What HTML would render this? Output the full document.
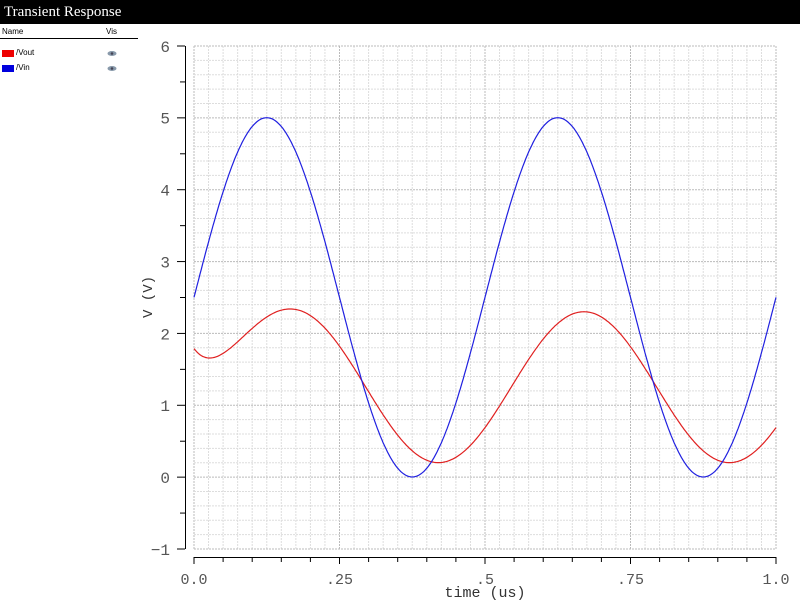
<!DOCTYPE html>
<html><head><meta charset="utf-8"><style>
body{margin:0;width:800px;height:600px;background:#fff;overflow:hidden;position:relative;font-family:"Liberation Mono",monospace}
#tb{position:absolute;left:0;top:0;width:800px;height:24px;background:#000;color:#fff;font-family:"Liberation Serif",serif;font-size:15px;line-height:24px;padding-left:4px;box-sizing:border-box}
.s{position:absolute;font-size:9px;color:#000}
</style></head><body>
<div id="tb">Transient Response</div>
<div class="s" style="left:2px;top:27px;font-family:'Liberation Sans',sans-serif;font-size:8px">Name</div>
<div class="s" style="left:106px;top:27px;font-family:'Liberation Sans',sans-serif;font-size:8px">Vis</div>
<div style="position:absolute;left:0;top:38px;width:138px;height:1px;background:#000"></div>
<div style="position:absolute;left:2px;top:50px;width:12px;height:7px;background:#e00"></div>
<div style="position:absolute;left:2px;top:65px;width:12px;height:7px;background:#00d"></div>
<div class="s" style="left:16px;top:48px;font-family:'Liberation Sans',sans-serif;font-size:8px">/Vout</div>
<div class="s" style="left:16px;top:63px;font-family:'Liberation Sans',sans-serif;font-size:8px">/Vin</div>
<svg style="position:absolute;left:106px;top:50px" width="12" height="24"><ellipse cx="6" cy="3.5" rx="4.5" ry="2.5" fill="#8899aa"/><circle cx="6" cy="3.5" r="1.3" fill="#445"/><ellipse cx="6" cy="18.5" rx="4.5" ry="2.5" fill="#8899aa"/><circle cx="6" cy="18.5" r="1.3" fill="#445"/></svg>
<svg id="p" style="position:absolute;left:0;top:0" width="800" height="600" font-family="Liberation Mono, monospace"></svg>
<script>
var s='';
var X=function(t){return 194+t*582},Y=function(v){return 477-v*71.857};
for(var i=0;i<=40;i++){var x=X(i/40);s+='<line x1="'+x+'" y1="46" x2="'+x+'" y2="549" stroke="'+(i%10==0?'#bbb':'#ddd')+'" stroke-dasharray="2,1"/>';}
for(var j=0;j<=35;j++){var y=46+j*503/35;s+='<line x1="194" y1="'+y+'" x2="776" y2="'+y+'" stroke="'+(j%5==0?'#bbb':'#ddd')+'" stroke-dasharray="2,1"/>';}
s+='<line x1="185.5" y1="46" x2="185.5" y2="549" stroke="#000"/>';
for(var j=0;j<=14;j++){var y=46+j*503/14;s+='<line x1="'+(j%2==0?177:180)+'" y1="'+y+'" x2="185" y2="'+y+'" stroke="#000"/>';}
for(var v=6;v>=-1;v--){s+='<text x="170" y="'+(Y(v)+6)+'" text-anchor="end" font-size="16" fill="#555">'+(v<0?'−1':v)+'</text>';}
s+='<line x1="194" y1="557.5" x2="776" y2="557.5" stroke="#000"/>';
for(var i=0;i<=20;i++){var x=X(i/20);s+='<line x1="'+x+'" y1="557" x2="'+x+'" y2="'+(i%5==0?564:562)+'" stroke="#000"/>';}
var lb=['0.0','.25','.5','.75','1.0'];
for(var i=0;i<5;i++)s+='<text x="'+X(i/4)+'" y="584" text-anchor="middle" font-size="15" fill="#555">'+lb[i]+'</text>';
s+='<text x="485" y="597" text-anchor="middle" font-size="15" fill="#333">time (us)</text>';
s+='<text x="152" y="297" text-anchor="middle" font-size="14" fill="#333" transform="rotate(-90 152 297)">V (V)</text>';
var a='',b='';
for(var k=0;k<=400;k++){var t=k/400;var vi=2.5+2.5*Math.sin(2*Math.PI*t/0.5);var vo=1.25+1.05*Math.sin(2*Math.PI*(t-0.045)/0.5)+1.1*Math.exp(-t/0.05);
a+=X(t).toFixed(1)+','+Y(vi).toFixed(1)+' ';b+=X(t).toFixed(1)+','+Y(vo).toFixed(1)+' ';}
s+='<polyline points="'+b+'" fill="none" stroke="#e02020" stroke-width="1.2"/>';
s+='<polyline points="'+a+'" fill="none" stroke="#2020e0" stroke-width="1.2"/>';
document.getElementById('p').innerHTML=s;
</script>
</body></html>
